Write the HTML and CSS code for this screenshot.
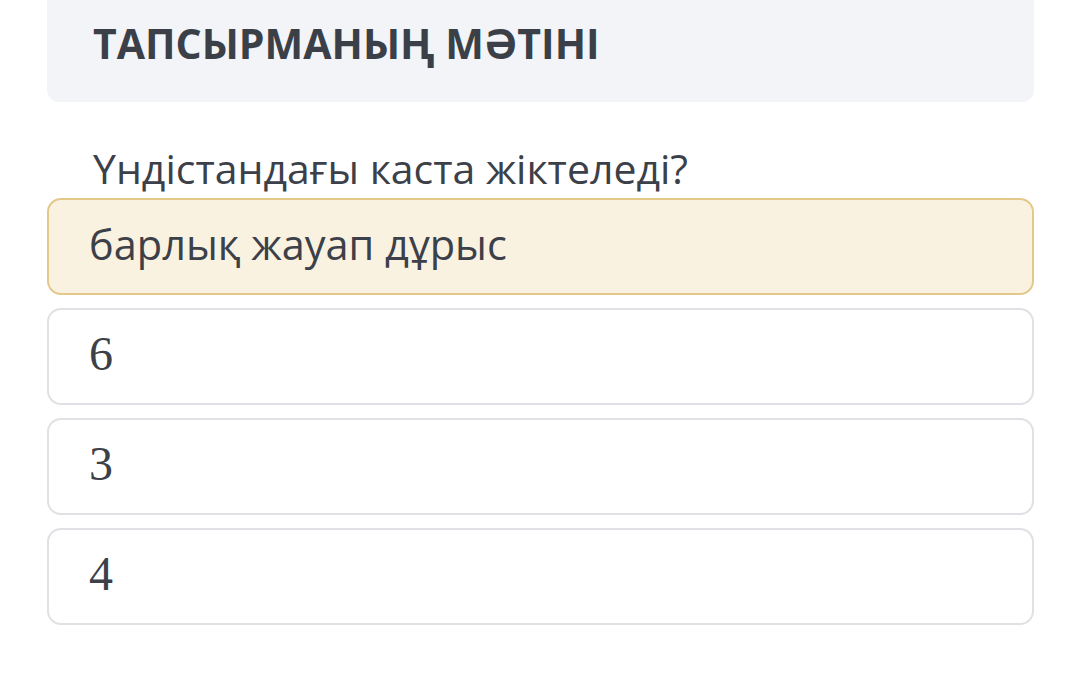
FILE: index.html
```html
<!DOCTYPE html>
<html lang="kk">
<head>
    <meta charset="UTF-8">
    <meta name="viewport" content="width=device-width, initial-scale=1.0">
    <title>Тапсырманың мәтіні</title>
    <link rel="stylesheet" href="styles.css">
</head>
<body>

<div class="task">
    <div class="task-header">
        <h2>Тапсырманың мәтіні</h2>
    </div>

    <p class="question">Үндістандағы каста жіктеледі?</p>

    <ul class="answers">
        <li class="answer selected">барлық жауап дұрыс</li>
        <li class="answer"><span class="math">6</span></li>
        <li class="answer"><span class="math">3</span></li>
        <li class="answer"><span class="math">4</span></li>
    </ul>
</div>

</body>
</html>
```

FILE: styles.css
```css
body {
    font-family: "Open Sans", Arial, sans-serif;
    margin: 0;
    padding: 0;
    background-color: white;
    color: #3c4048;
}

.task {
    padding: 0 46px 0 47px;
}

.task-header {
    background-color: #f2f4f7;
    border-radius: 0 0 12px 12px;
    padding: 11px 46px 27px;
}

.task-header h2 {
    margin: 0;
    font-size: 41px;
    font-weight: 700;
    text-transform: uppercase;
    color: #3a3f48;
    line-height: 64px;
}

.question {
    margin: 38px 0 0 46px;
    font-size: 41px;
    line-height: 56px;
}

.answers {
    list-style: none;
    margin: 2px 0 0;
    padding: 0;
    display: flex;
    flex-direction: column;
    gap: 13px;
}

.answer {
    height: 87px;
    display: flex;
    align-items: center;
    padding: 0 40px 6px;
    box-sizing: content-box;
    border: 2px solid #dfe1e4;
    border-radius: 14px;
    font-size: 41.5px;
}

.answer.selected {
    background-color: #faf2e0;
    border-color: #e3c88a;
}

.math {
    font-family: "Liberation Serif", "DejaVu Serif", serif;
    font-size: 48px;
}
```
